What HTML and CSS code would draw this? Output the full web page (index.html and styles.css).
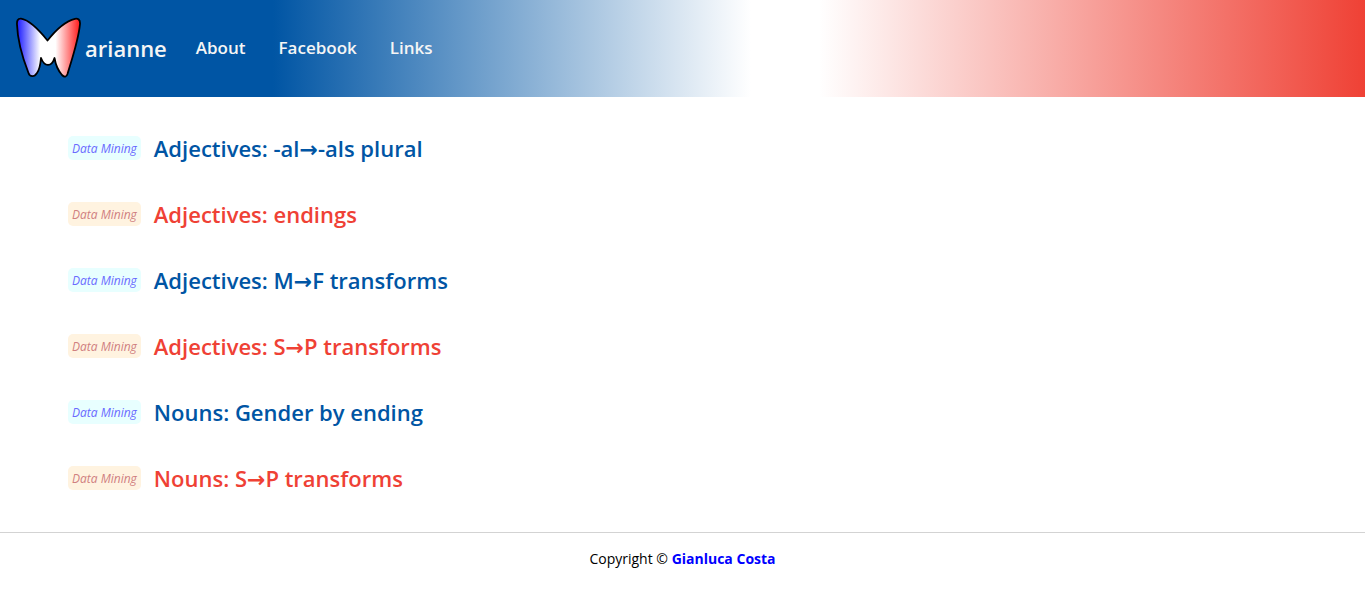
FILE: index.html
```html
<!DOCTYPE html>
<html lang="en">
<head>
<meta charset="utf-8">
<meta name="viewport" content="width=device-width, initial-scale=1">
<title>Marianne</title>
<link rel="stylesheet" href="styles.css">
</head>
<body>
<header class="header">
  <a class="brand" href="#" aria-label="Marianne">
    <svg class="logo" viewBox="0 0 66 64" aria-hidden="true">
      <defs>
        <linearGradient id="wings" x1="0" y1="0" x2="1" y2="0">
          <stop offset="0.03" stop-color="#2a2aff"/>
          <stop offset="0.37" stop-color="#fff"/>
          <stop offset="0.61" stop-color="#fff"/>
          <stop offset="0.97" stop-color="#ff2a2a"/>
        </linearGradient>
      </defs>
      <path d="M31.500 24.500C25 16.500 14 4 5 2.700C1.500 2.500 0.800 5 1 8.500C1.500 24 7 43 12.500 57C14 61.500 18.500 61 21 57C24 53 24.500 48 25 42C28.500 51 35.500 51.500 38.500 42C39.500 48 42.500 55 46 59C48.500 61.500 50.500 61 51.500 58C56 43 62.500 24 64 8C64.300 3.500 62 2.300 59 2.800C48 5.500 37 17.500 31.500 24.500Z" fill="url(#wings)" stroke="#000" stroke-width="1.800" stroke-linejoin="round"/>
    </svg>
    <span class="brand-name">arianne</span>
  </a>
  <nav class="nav">
    <a href="#">About</a>
    <a href="#">Facebook</a>
    <a href="#">Links</a>
  </nav>
</header>
<main class="main">
  <ul class="topics">
    <li class="topic"><span class="tag">Data Mining</span><a href="#">Adjectives: -al→-als plural</a></li>
    <li class="topic"><span class="tag">Data Mining</span><a href="#">Adjectives: endings</a></li>
    <li class="topic"><span class="tag">Data Mining</span><a href="#">Adjectives: M→F transforms</a></li>
    <li class="topic"><span class="tag">Data Mining</span><a href="#">Adjectives: S→P transforms</a></li>
    <li class="topic"><span class="tag">Data Mining</span><a href="#">Nouns: Gender by ending</a></li>
    <li class="topic"><span class="tag">Data Mining</span><a href="#">Nouns: S→P transforms</a></li>
  </ul>
</main>
<footer class="footer">Copyright © <a href="#">Gianluca Costa</a></footer>
</body>
</html>
```
FILE: styles.css
```css
body {
  margin: 0;
  background: #fff;
  color: #000;
  font-family: "Open Sans", "DejaVu Sans", sans-serif;
  font-size: 14px;
  line-height: 20px;
}

a {
  text-decoration: none;
}

.header {
  display: flex;
  align-items: center;
  gap: 29px;
  padding: 16px 16px 17px;
  background: linear-gradient(to right, #0055a4 20%, #fff 55%, #fff 60%, #ef4135 100%);
}

.brand {
  display: flex;
  align-items: center;
  gap: 3px;
  color: #f5f5f5;
  font-size: 22px;
  font-weight: 600;
  line-height: 32px;
}

.logo {
  width: 66px;
  height: 64px;
}

.nav {
  display: flex;
  gap: 33px;
  font-size: 17px;
  font-weight: 600;
  line-height: 24px;
}

.nav a {
  color: #f5f5f5;
}

.main {
  padding: 31px 68px 34px;
}

.topics {
  display: flex;
  flex-direction: column;
  gap: 26px;
  margin: 0;
  padding: 0;
  list-style: none;
}

.topic {
  display: flex;
  align-items: center;
  gap: 13px;
  min-height: 40px;
}

.topic a {
  color: #0055a4;
  font-size: 22px;
  font-weight: 600;
  line-height: 32px;
}

.tag {
  padding: 3px 4px 1px;
  border-radius: 5px;
  background: #e8ffff;
  color: #6a6aff;
  font-size: 12px;
  font-style: italic;
}

.topic:nth-child(even) a {
  color: #ef4135;
}

.topic:nth-child(even) .tag {
  background: #fff3e0;
  color: #d08080;
}

.footer {
  padding: 16px;
  border-top: 1px solid #d3d3d3;
  text-align: center;
}

.footer a {
  color: #0000ff;
  font-weight: 700;
}
```
